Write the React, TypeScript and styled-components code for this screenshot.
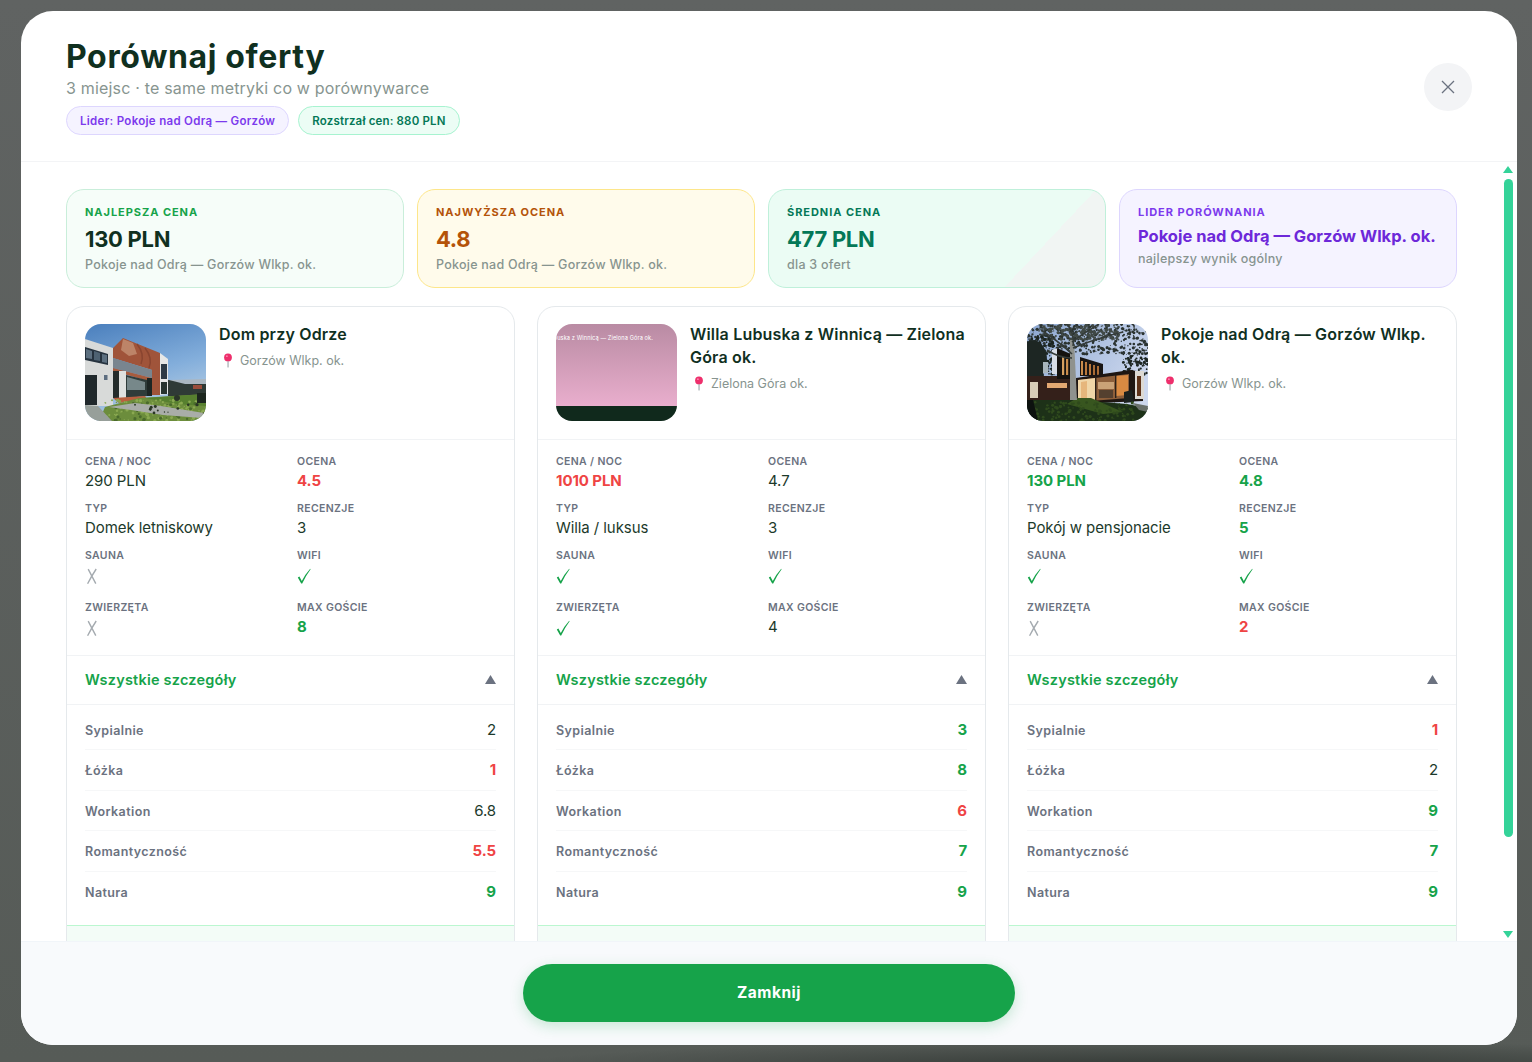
import React from "react";
import styled, { createGlobalStyle } from "styled-components";

const Global = createGlobalStyle`
  html, body { margin: 0; padding: 0; height: 100%; overflow: hidden; }
  * { box-sizing: border-box; }
  body { font-family: Inter, "Noto Sans", "Liberation Sans", sans-serif; }
`;

const Page = styled.div`
  width: 1532px;
  height: 1062px;
  padding: 11px 15px 17px 21px;
  background: radial-gradient(700px 30px at 1180px 1070px, #2f3531 0%, rgba(47, 53, 49, 0) 100%),
    linear-gradient(180deg, #606362 0%, #565b57 100%);
`;

const Modal = styled.div`
  position: relative;
  height: 100%;
  display: flex;
  flex-direction: column;
  background: #fff;
  border-radius: 32px;
  overflow: hidden;
`;

const Header = styled.header`
  height: 151px;
  flex: none;
  display: flex;
  justify-content: space-between;
  align-items: flex-start;
  padding: 26px 45px 0;
  border-bottom: 1px solid #f3f4f6;
`;

const Title = styled.h1`
  margin: 0;
  font-size: 32px;
  line-height: 40px;
  font-weight: 700;
  letter-spacing: 0.65px;
  color: #10301f;
`;

const Subtitle = styled.p`
  margin: 0;
  font-size: 16px;
  line-height: 22px;
  letter-spacing: 0.19px;
  color: #879590;
`;

const Pills = styled.div`
  display: flex;
  gap: 9px;
  margin-top: 7px;
`;

const Pill = styled.span<{ $tone: "violet" | "green" }>`
  height: 29px;
  display: flex;
  align-items: center;
  padding: 0 13px;
  border-radius: 15px;
  font-size: 11.5px;
  font-weight: 600;
  letter-spacing: ${(p) => (p.$tone === "violet" ? "0.3px" : "0.17px")};
  color: ${(p) => (p.$tone === "violet" ? "#7c3aed" : "#047857")};
  background: ${(p) => (p.$tone === "violet" ? "#f5f3ff" : "#ecfdf5")};
  border: 1px solid ${(p) => (p.$tone === "violet" ? "#ddd6fe" : "#a7f3d0")};
`;

const CloseButton = styled.button`
  width: 48px;
  height: 48px;
  margin-top: 26px;
  border: 0;
  padding: 0;
  border-radius: 50%;
  background: #f3f4f6;
  display: flex;
  align-items: center;
  justify-content: center;
  color: #6b7280;
`;

const Body = styled.main`
  flex: 1;
  min-height: 0;
  overflow: hidden;
  padding: 27px 60px 0 45px;
`;

const Stats = styled.section`
  display: grid;
  grid-template-columns: repeat(4, 338px);
  gap: 13px;
`;

const statTones = {
  green: { bg: "#f6fdf9", border: "#c9eeda", label: "#16a34a", value: "#10301f" },
  amber: { bg: "#fffbeb", border: "#fde68a", label: "#b45309", value: "#b45309" },
  mint: { bg: "linear-gradient(133.2deg, #ebfcf4 76.5%, #f1f5f3 76.5%)", border: "#bff0da", label: "#047857", value: "#047857" },
  violet: { bg: "#f5f3ff", border: "#ddd6fe", label: "#7c3aed", value: "#6d28d9" },
};
type StatTone = keyof typeof statTones;

const StatCard = styled.div<{ $tone: StatTone }>`
  height: 99px;
  padding: 15px 18px 0;
  border-radius: 18px;
  background: ${(p) => statTones[p.$tone].bg};
  border: 1px solid ${(p) => statTones[p.$tone].border};
`;

const StatLabel = styled.div<{ $tone: StatTone }>`
  font-size: 11px;
  line-height: 15px;
  font-weight: 700;
  letter-spacing: 0.95px;
  color: ${(p) => statTones[p.$tone].label};
`;

const StatValue = styled.div<{ $tone: StatTone; $small?: boolean }>`
  margin-top: ${(p) => (p.$small ? "4px" : "5px")};
  font-size: ${(p) => (p.$small ? "16.5px" : "22px")};
  line-height: ${(p) => (p.$small ? "24px" : "28px")};
  font-weight: 700;
  letter-spacing: ${(p) => (p.$small ? "0" : "-0.3px")};
  color: ${(p) => statTones[p.$tone].value};
`;

const StatNote = styled.div<{ $small?: boolean }>`
  margin-top: ${(p) => (p.$small ? "2px" : "3px")};
  font-size: 12.5px;
  line-height: 18px;
  letter-spacing: 0.25px;
  font-weight: 500;
  color: #87948f;
`;

const Compare = styled.section`
  display: grid;
  grid-template-columns: repeat(3, 449px);
  gap: 22px;
  margin-top: 18px;
`;

const Card = styled.article`
  border: 1px solid #e5e9ec;
  border-radius: 18px;
  background: #fff;
  overflow: hidden;
`;

const CardHead = styled.div`
  height: 133px;
  display: flex;
  gap: 13px;
  padding: 17px 18px 0;
  border-bottom: 1px solid #f1f3f5;
`;

const Thumb = styled.svg<{ $photo?: boolean }>`
  width: 121px;
  height: 97px;
  flex: none;
  border-radius: 16px;
  display: block;
  ${(p) => (p.$photo ? "filter: blur(0.35px);" : "")}
`;

const CardInfo = styled.div`
  min-width: 0;
  margin-top: -1px;
`;

const CardName = styled.h3`
  margin: 0;
  font-size: 16px;
  line-height: 23px;
  font-weight: 600;
  letter-spacing: 0.18px;
  color: #10301f;
`;

const Place = styled.div`
  display: flex;
  align-items: center;
  gap: 6px;
  margin-top: 4px;
  padding-left: 3px;
  height: 20px;
  font-size: 12.5px;
  color: #87948f;
`;

const Metrics = styled.div`
  display: grid;
  grid-template-columns: 200px 200px;
  align-content: start;
  column-gap: 12px;
  padding: 15px 18px 0;
  height: 216px;
  border-bottom: 1px solid #f1f3f5;
`;

const Metric = styled.div<{ $tall?: boolean }>`
  height: ${(p) => (p.$tall ? "52px" : "47px")};
`;

const MetricLabel = styled.div`
  font-size: 10.5px;
  line-height: 14px;
  font-weight: 600;
  letter-spacing: 0.35px;
  color: #6b7280;
`;

type Tone = "good" | "bad" | "plain";

const toneColor = (t: Tone) => (t === "good" ? "#16a34a" : t === "bad" ? "#ef4444" : "#1c3a2b");

const MetricValue = styled.div<{ $tone: Tone }>`
  margin-top: 0.6px;
  font-size: 15px;
  line-height: 21px;
  letter-spacing: -0.08px;
  font-weight: ${(p) => (p.$tone === "plain" ? 400 : 700)};
  color: ${(p) => toneColor(p.$tone)};
`;

const Flag = styled.svg`
  display: block;
  width: 14px;
  height: 18px;
  margin-top: 4px;
`;

const Toggle = styled.div`
  height: 49px;
  display: flex;
  align-items: center;
  justify-content: space-between;
  padding: 0 18px 2px;
  border-bottom: 1px solid #f1f3f5;
  font-size: 14.5px;
  font-weight: 600;
  letter-spacing: 0.22px;
  color: #16a34a;
`;

const Details = styled.div`
  padding: 4.5px 18px 12.5px;
`;

const DetailRow = styled.div`
  height: 40.5px;
  display: flex;
  align-items: center;
  justify-content: space-between;
  border-bottom: 1px solid #f6f7f8;
  &:last-child {
    border-bottom: 0;
  }
`;

const DetailLabel = styled.span`
  padding-top: 2px;
  font-size: 12.5px;
  font-weight: 600;
  letter-spacing: 0.4px;
  color: #6b7280;
`;

const DetailValue = styled.span<{ $tone: Tone }>`
  font-size: 15px;
  letter-spacing: -0.1px;
  font-weight: ${(p) => (p.$tone === "plain" ? 400 : 700)};
  color: ${(p) => toneColor(p.$tone)};
`;

const CardFoot = styled.div`
  height: 60px;
  border-top: 1px solid #bbf7d0;
  background: #f3fcf7;
`;

const Footer = styled.footer`
  height: 104px;
  flex: none;
  padding: 22px 0;
  display: flex;
  justify-content: center;
  background: #f8fafc;
  border-top: 1px solid #f1f5f9;
`;

const CloseCta = styled.button`
  width: 492px;
  height: 58px;
  padding: 0 0 2px;
  border: 0;
  border-radius: 29px;
  background: #16a34a;
  color: #fff;
  font-family: inherit;
  font-size: 15.5px;
  font-weight: 700;
  letter-spacing: 0.5px;
  box-shadow: 0 4px 14px rgba(22, 163, 74, 0.22);
`;

/* scrollbar sits over the modal edge */
const Scroll = styled.div`
  position: absolute;
  top: 155px;
  right: 4px;
  width: 10px;
  height: 772px;
  display: flex;
  flex-direction: column;
  align-items: center;
  justify-content: space-between;
`;

const ScrollThumb = styled.div`
  width: 9px;
  height: 658px;
  margin-top: 6px;
  margin-bottom: auto;
  border-radius: 5px;
  background: #34d399;
`;

const Arrow = styled.div<{ $down?: boolean }>`
  width: 0;
  height: 0;
  border-left: 5px solid transparent;
  border-right: 5px solid transparent;
  ${(p) => (p.$down ? "border-top: 7px solid #34d399;" : "border-bottom: 7px solid #34d399;")}
`;

// small seeded speckle, gives the drawn photos some leaf and grass texture
const speckle = (n: number, seed: number, x: number, y: number, w: number, h: number) => {
  let s = seed;
  const next = () => {
    s = (s * 16807) % 2147483647;
    return s / 2147483647;
  };
  return Array.from({ length: n }, () => ({ x: x + next() * w, y: y + next() * h, r: 0.4 + next() * 1.3 }));
};

const Specks: React.FC<{ n: number; seed: number; box: number[]; fill: string }> = ({ n, seed, box, fill }) => (
  <g fill={fill}>
    {speckle(n, seed, box[0], box[1], box[2], box[3]).map((d, i) => (
      <circle key={i} cx={d.x} cy={d.y} r={d.r} />
    ))}
  </g>
);

const HouseOne = () => (
  <Thumb $photo viewBox="0 0 121 97" preserveAspectRatio="none">
    <defs>
      <linearGradient id="sky1" x1="0" y1="0" x2="0.35" y2="1">
        <stop offset="0" stopColor="#4a7fbd" />
        <stop offset="0.6" stopColor="#83aedb" />
        <stop offset="1" stopColor="#b4cde4" />
      </linearGradient>
    </defs>
    <rect width="121" height="97" fill="url(#sky1)" />
    <polygon points="83,56 121,57 121,72 83,72" fill="#2f3a36" />
    <polygon points="84,56 121,55 121,60 100,60" fill="#aab6c0" />
    <rect x="108" y="61" width="9" height="4" fill="#9a4c3a" />
    <polygon points="75,29 83,35 83,70 75,71" fill="#e6e7e6" />
    <rect x="76" y="40" width="6" height="15" fill="#2d3a46" />
    <rect x="76" y="58" width="6" height="12" fill="#27332f" />
    <polygon points="0,15 28,24 28,38 28,82 0,82" fill="#d8dad9" />
    <polygon points="0,23 23,30 23,41 0,36" fill="#26333f" />
    <polygon points="1,25 7,27 7,35 1,34" fill="#5d7080" />
    <polygon points="9,27 15,29 15,37 9,36" fill="#4e6272" />
    <polygon points="17,30 22,31 22,39 17,38" fill="#5d7080" />
    <rect x="0" y="51" width="12" height="30" fill="#20282b" />
    <rect x="19" y="51" width="3.5" height="5" fill="#5c6d80" />
    <polygon points="28,24 38,14 75,29 75,71 67,71 67,46 28,34" fill="#a0543a" />
    <polygon points="38,15 48,19 52,30 44,32 36,26" fill="#bd8468" />
    <path d="M52 20 Q60 30 56 40 M60 24 Q68 34 64 44" stroke="#8a4530" strokeWidth="1.5" fill="none" />
    <polygon points="28,34 67,46 67,54 28,44" fill="#79858f" />
    <polygon points="28,44 67,54 67,58 28,47" fill="#a75c3e" />
    <rect x="28" y="47" width="6" height="27" fill="#242c2b" />
    <rect x="34" y="47" width="7" height="27" fill="#dfe1df" />
    <polygon points="41,51 62,56 62,72 41,74" fill="#2f3c3a" />
    <polygon points="42,53 60,58 60,66 42,66" fill="#77888a" />
    <rect x="62" y="54" width="5" height="18" fill="#1d2624" />
    <polygon points="28,74 60,72 62,75 34,79" fill="#b9603f" />
    <polygon points="54,74 121,70 121,97 14,97 20,83" fill="#6c8d3c" />
    <polygon points="60,74 121,70 121,82 92,80" fill="#57802f" />
    <Specks n={120} seed={77} box={[20, 76, 101, 21]} fill="#8aa951" />
    <Specks n={40} seed={91} box={[30, 78, 90, 19]} fill="#4a6a2c" />
    <polygon points="24,83 50,79 76,82 119,89 117,94 78,91 46,86" fill="#a9ada8" />
    <polygon points="0,81 13,82 27,97 0,97" fill="#979f9a" />
    <Specks n={14} seed={31} box={[50, 80, 70, 10]} fill="#2a3625" />
    <rect x="112" y="69" width="9" height="10" fill="#1c261e" />
    <circle cx="92" cy="74" r="3" fill="#2a3528" />
  </Thumb>
);

const HousePlaceholder = () => (
  <Thumb viewBox="0 0 121 97" preserveAspectRatio="none">
    <defs>
      <linearGradient id="sky2" x1="0" y1="0" x2="0" y2="1">
        <stop offset="0" stopColor="#b98ba3" />
        <stop offset="1" stopColor="#e9aecd" />
      </linearGradient>
    </defs>
    <rect width="121" height="82" fill="url(#sky2)" />
    <rect y="82" width="121" height="15" fill="#10291c" />
    <text x="97" y="16" textAnchor="end" fontSize="5.6" letterSpacing="0.12" fill="#ffffff" fontFamily="Inter, sans-serif">
      Willa Lubuska z Winnicą — Zielona Góra ok.
    </text>
  </Thumb>
);

const HouseTwo = () => (
  <Thumb $photo viewBox="0 0 121 97" preserveAspectRatio="none">
    <defs>
      <linearGradient id="sky3" x1="0" y1="0" x2="1" y2="0.5">
        <stop offset="0" stopColor="#8ba6d0" />
        <stop offset="1" stopColor="#cdd8ee" />
      </linearGradient>
    </defs>
    <rect width="121" height="97" fill="url(#sky3)" />
    <Specks n={420} seed={11} box={[0, 0, 121, 30]} fill="#2b3331" />
    <Specks n={220} seed={23} box={[12, 0, 80, 16]} fill="#414a47" />
    <Specks n={150} seed={47} box={[0, 12, 28, 46]} fill="#1c2522" />
    <Specks n={90} seed={53} box={[96, 26, 25, 26]} fill="#1e2723" />
    <ellipse cx="6" cy="36" rx="14" ry="20" fill="#1d2623" />
    <rect x="0" y="52" width="46" height="24" fill="#34201a" />
    <polygon points="25,26 31,24 31,50 25,50" fill="#d8dde6" />
    <rect x="16" y="38" width="5" height="11" fill="#a9b6bd" />
    <polygon points="30,24 46,31 46,55 30,55" fill="#15120f" />
    <rect x="35" y="33" width="2.2" height="18" fill="#d6a060" />
    <rect x="39" y="35" width="2.2" height="16" fill="#c98c4c" />
    <polygon points="53,33 76,40 76,52 53,52" fill="#181513" />
    <rect x="54" y="37" width="2" height="14" fill="#c98c4c" />
    <rect x="58" y="38" width="2" height="13" fill="#b9793e" />
    <rect x="62" y="40" width="2" height="11" fill="#b9793e" />
    <rect x="66" y="41" width="2" height="10" fill="#a96c36" />
    <rect x="70" y="42" width="2" height="9" fill="#a96c36" />
    <rect x="20" y="59" width="20" height="5" fill="#e3a872" />
    <rect x="3" y="58" width="8" height="16" fill="#d7cdb8" />
    <polygon points="49,54 103,46 116,48 116,77 49,80" fill="#1e1612" />
    <polygon points="51,56 102,50 102,74 51,78" fill="#8d5f3b" />
    <polygon points="51,56 68,54 68,76 51,78" fill="#f0d6a8" />
    <polygon points="54,58 60,57 60,75 54,76" fill="#e6b67c" />
    <polygon points="89,52 101,51 101,71 89,72" fill="#d98a42" />
    <rect x="68" y="53" width="1.4" height="24" fill="#2a1f18" />
    <rect x="88" y="51" width="1.4" height="23" fill="#2a1f18" />
    <rect x="71" y="58" width="16" height="7" fill="#caa277" />
    <rect x="72" y="66" width="14" height="8" fill="#54402f" />
    <rect x="108" y="47" width="9" height="28" fill="#dcd9d3" />
    <rect x="110" y="52" width="4" height="20" fill="#5d3219" />
    <polygon points="97,68 105,66 107,78 97,79" fill="#1b211f" />
    <polygon points="0,76 50,76 100,80 121,84 121,97 0,97" fill="#1d3118" />
    <polygon points="50,74 64,74 96,88 76,90 40,80" fill="#38561f" />
    <Specks n={130} seed={61} box={[8, 78, 100, 19]} fill="#2f4a1d" />
    <polygon points="106,79 121,82 121,88 112,86" fill="#69706a" />
    <polygon points="0,76 6,76 11,97 0,97" fill="#0d120f" />
    <polygon points="43,16 47,16 50,76 43,76" fill="#8f928e" />
    <path d="M45 30 Q30 16 14 6 M46 24 Q70 14 96 8 M46 22 Q48 10 40 0 M45 18 Q58 8 72 0 M45 34 Q32 34 20 26" stroke="#343b39" strokeWidth="1.6" fill="none" />
  </Thumb>
);

const Pin = () => (
  <svg width="12" height="15" viewBox="0 0 12 15">
    <rect x="5.4" y="6" width="1.3" height="8.6" rx="0.6" fill="#a9b0b5" />
    <circle cx="6" cy="4.4" r="3.9" fill="#ee2f6c" />
    <circle cx="4.9" cy="3.2" r="0.9" fill="#f98bb0" />
  </svg>
);

const Yes = () => (
  <Flag viewBox="0 0 14 18">
    <path d="M0.8 10.6 L2.4 9.6 L4.8 14 Q8 7.6 13.2 1.8 L13.6 2.2 Q9 8.4 5.2 16.6 L4.2 16.6 Z" fill="#16a34a" />
  </Flag>
);

const No = () => (
  <Flag viewBox="0 0 14 18">
    <path d="M3.2 2.2 L10.8 16.6 M11.2 2 Q6.6 9 2.6 16.8" stroke="#a5abb0" strokeWidth="1.4" fill="none" />
  </Flag>
);

type Cell = { label: string; value?: string; tone?: Tone; flag?: boolean };

type Offer = {
  name: string;
  place: string;
  thumb: React.ReactNode;
  cells: Cell[];
  details: [string, string, Tone][];
};

const offers: Offer[] = [
  {
    name: "Dom przy Odrze",
    place: "Gorzów Wlkp. ok.",
    thumb: <HouseOne />,
    cells: [
      { label: "CENA / NOC", value: "290 PLN" },
      { label: "OCENA", value: "4.5", tone: "bad" },
      { label: "TYP", value: "Domek letniskowy" },
      { label: "RECENZJE", value: "3" },
      { label: "SAUNA", flag: false },
      { label: "WIFI", flag: true },
      { label: "ZWIERZĘTA", flag: false },
      { label: "MAX GOŚCIE", value: "8", tone: "good" },
    ],
    details: [
      ["Sypialnie", "2", "plain"],
      ["Łóżka", "1", "bad"],
      ["Workation", "6.8", "plain"],
      ["Romantyczność", "5.5", "bad"],
      ["Natura", "9", "good"],
    ],
  },
  {
    name: "Willa Lubuska z Winnicą — Zielona Góra ok.",
    place: "Zielona Góra ok.",
    thumb: <HousePlaceholder />,
    cells: [
      { label: "CENA / NOC", value: "1010 PLN", tone: "bad" },
      { label: "OCENA", value: "4.7" },
      { label: "TYP", value: "Willa / luksus" },
      { label: "RECENZJE", value: "3" },
      { label: "SAUNA", flag: true },
      { label: "WIFI", flag: true },
      { label: "ZWIERZĘTA", flag: true },
      { label: "MAX GOŚCIE", value: "4" },
    ],
    details: [
      ["Sypialnie", "3", "good"],
      ["Łóżka", "8", "good"],
      ["Workation", "6", "bad"],
      ["Romantyczność", "7", "good"],
      ["Natura", "9", "good"],
    ],
  },
  {
    name: "Pokoje nad Odrą — Gorzów Wlkp. ok.",
    place: "Gorzów Wlkp. ok.",
    thumb: <HouseTwo />,
    cells: [
      { label: "CENA / NOC", value: "130 PLN", tone: "good" },
      { label: "OCENA", value: "4.8", tone: "good" },
      { label: "TYP", value: "Pokój w pensjonacie" },
      { label: "RECENZJE", value: "5", tone: "good" },
      { label: "SAUNA", flag: true },
      { label: "WIFI", flag: true },
      { label: "ZWIERZĘTA", flag: false },
      { label: "MAX GOŚCIE", value: "2", tone: "bad" },
    ],
    details: [
      ["Sypialnie", "1", "bad"],
      ["Łóżka", "2", "plain"],
      ["Workation", "9", "good"],
      ["Romantyczność", "7", "good"],
      ["Natura", "9", "good"],
    ],
  },
];

const App: React.FC = () => (
  <Page>
    <Global />
    <Modal>
      <Header>
        <div>
          <Title>Porównaj oferty</Title>
          <Subtitle>3 miejsc · te same metryki co w porównywarce</Subtitle>
          <Pills>
            <Pill $tone="violet">Lider: Pokoje nad Odrą — Gorzów</Pill>
            <Pill $tone="green">Rozstrzał cen: 880 PLN</Pill>
          </Pills>
        </div>
        <CloseButton aria-label="Zamknij">
          <svg width="14" height="14" viewBox="0 0 14 14">
            <path d="M1 1 L13 13 M13 1 L1 13" stroke="#6b7280" strokeWidth="1.3" fill="none" />
          </svg>
        </CloseButton>
      </Header>
      <Body>
        <Stats>
          <StatCard $tone="green">
            <StatLabel $tone="green">NAJLEPSZA CENA</StatLabel>
            <StatValue $tone="green">130 PLN</StatValue>
            <StatNote>Pokoje nad Odrą — Gorzów Wlkp. ok.</StatNote>
          </StatCard>
          <StatCard $tone="amber">
            <StatLabel $tone="amber">NAJWYŻSZA OCENA</StatLabel>
            <StatValue $tone="amber">4.8</StatValue>
            <StatNote>Pokoje nad Odrą — Gorzów Wlkp. ok.</StatNote>
          </StatCard>
          <StatCard $tone="mint">
            <StatLabel $tone="mint">ŚREDNIA CENA</StatLabel>
            <StatValue $tone="mint">477 PLN</StatValue>
            <StatNote>dla 3 ofert</StatNote>
          </StatCard>
          <StatCard $tone="violet">
            <StatLabel $tone="violet">LIDER PORÓWNANIA</StatLabel>
            <StatValue $tone="violet" $small>
              Pokoje nad Odrą — Gorzów Wlkp. ok.
            </StatValue>
            <StatNote $small>najlepszy wynik ogólny</StatNote>
          </StatCard>
        </Stats>
        <Compare>
          {offers.map((o) => (
            <Card key={o.name}>
              <CardHead>
                {o.thumb}
                <CardInfo>
                  <CardName>{o.name}</CardName>
                  <Place>
                    <Pin />
                    {o.place}
                  </Place>
                </CardInfo>
              </CardHead>
              <Metrics>
                {o.cells.map((c, i) => (
                  <Metric key={c.label} $tall={i >= 4 && i < 6}>
                    <MetricLabel>{c.label}</MetricLabel>
                    {c.value !== undefined ? (
                      <MetricValue $tone={c.tone ?? "plain"}>{c.value}</MetricValue>
                    ) : c.flag ? (
                      <Yes />
                    ) : (
                      <No />
                    )}
                  </Metric>
                ))}
              </Metrics>
              <Toggle>
                Wszystkie szczegóły
                <svg width="11" height="9" viewBox="0 0 11 9">
                  <path d="M5.5 0 L11 9 L0 9 Z" fill="#6b7280" />
                </svg>
              </Toggle>
              <Details>
                {o.details.map(([label, value, tone]) => (
                  <DetailRow key={label}>
                    <DetailLabel>{label}</DetailLabel>
                    <DetailValue $tone={tone}>{value}</DetailValue>
                  </DetailRow>
                ))}
              </Details>
              <CardFoot />
            </Card>
          ))}
        </Compare>
      </Body>
      <Footer>
        <CloseCta>Zamknij</CloseCta>
      </Footer>
      <Scroll>
        <Arrow />
        <ScrollThumb />
        <Arrow $down />
      </Scroll>
    </Modal>
  </Page>
);

export default App;
